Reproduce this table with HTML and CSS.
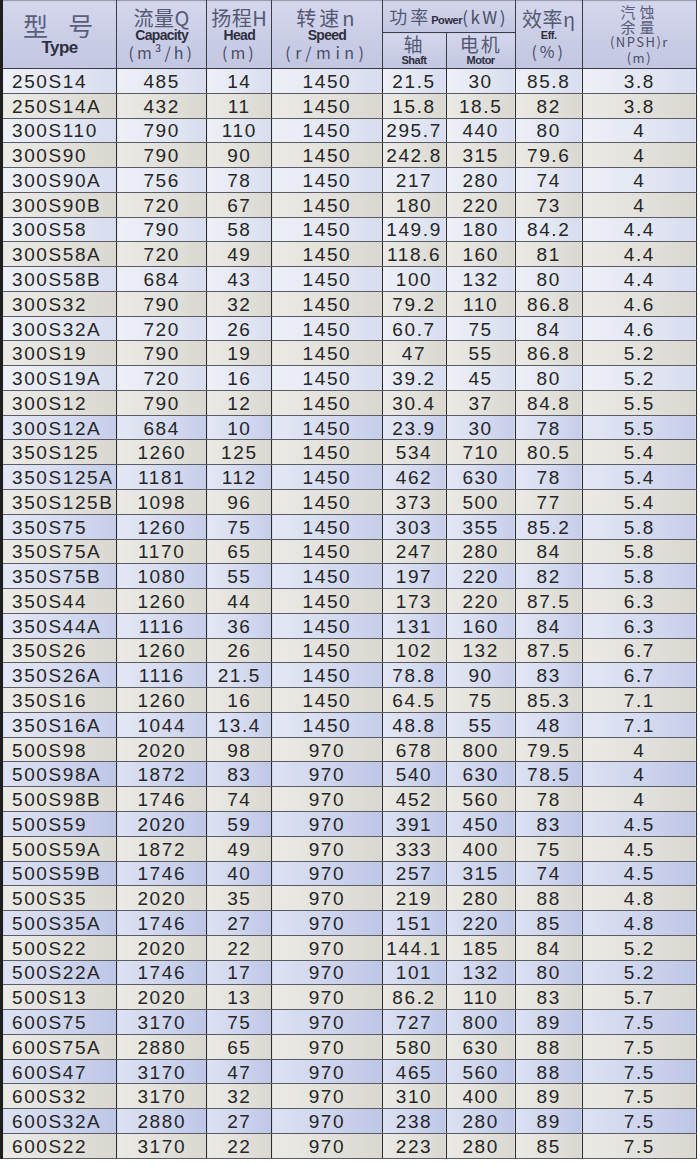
FILE: index.html
```html
<!DOCTYPE html>
<html lang="zh">
<head>
<meta charset="utf-8">
<title>S型双吸泵性能参数表</title>
<link rel="stylesheet" href="styles.css">
</head>
<body>
<table class="spec">
  <colgroup>
    <col class="c-type"><col class="c-cap"><col class="c-head"><col class="c-speed">
    <col class="c-shaft"><col class="c-motor"><col class="c-eff"><col class="c-npsh">
  </colgroup>
  <thead>
    <tr class="h1">
      <th rowspan="2" class="th-type"><span class="cn-big">型&nbsp;&nbsp;号</span><span class="en-big">Type</span></th>
      <th rowspan="2"><span class="cn">流量Q</span><span class="en">Capacity</span><span class="unit">(m³/h)</span></th>
      <th rowspan="2"><span class="cn">扬程H</span><span class="en">Head</span><span class="unit">(m)</span></th>
      <th rowspan="2" class="th-speed"><span class="cn">转速n</span><span class="en">Speed</span><span class="unit">(r/min)</span></th>
      <th colspan="2" class="th-power"><span class="cn">功率</span><span class="en-s">Power</span><span class="unit">(kW)</span></th>
      <th rowspan="2"><span class="cn">效率η</span><span class="en-s">Eff.</span><span class="unit">(%)</span></th>
      <th rowspan="2" class="th-npsh"><span class="cn-s">汽蚀</span><span class="cn-s">余量</span><span class="unit-s">(NPSH)r</span><span class="unit-s">(m)</span></th>
    </tr>
    <tr class="h2">
      <th><span class="cn-m">轴</span><span class="en-s">Shaft</span></th>
      <th><span class="cn-m">电机</span><span class="en-s">Motor</span></th>
    </tr>
  </thead>
  <tbody>
    <tr><td>250S14</td><td>485</td><td>14</td><td>1450</td><td>21.5</td><td>30</td><td>85.8</td><td>3.8</td></tr>
    <tr><td>250S14A</td><td>432</td><td>11</td><td>1450</td><td>15.8</td><td>18.5</td><td>82</td><td>3.8</td></tr>
    <tr><td>300S110</td><td>790</td><td>110</td><td>1450</td><td>295.7</td><td>440</td><td>80</td><td>4</td></tr>
    <tr><td>300S90</td><td>790</td><td>90</td><td>1450</td><td>242.8</td><td>315</td><td>79.6</td><td>4</td></tr>
    <tr><td>300S90A</td><td>756</td><td>78</td><td>1450</td><td>217</td><td>280</td><td>74</td><td>4</td></tr>
    <tr><td>300S90B</td><td>720</td><td>67</td><td>1450</td><td>180</td><td>220</td><td>73</td><td>4</td></tr>
    <tr><td>300S58</td><td>790</td><td>58</td><td>1450</td><td>149.9</td><td>180</td><td>84.2</td><td>4.4</td></tr>
    <tr><td>300S58A</td><td>720</td><td>49</td><td>1450</td><td>118.6</td><td>160</td><td>81</td><td>4.4</td></tr>
    <tr><td>300S58B</td><td>684</td><td>43</td><td>1450</td><td>100</td><td>132</td><td>80</td><td>4.4</td></tr>
    <tr><td>300S32</td><td>790</td><td>32</td><td>1450</td><td>79.2</td><td>110</td><td>86.8</td><td>4.6</td></tr>
    <tr><td>300S32A</td><td>720</td><td>26</td><td>1450</td><td>60.7</td><td>75</td><td>84</td><td>4.6</td></tr>
    <tr><td>300S19</td><td>790</td><td>19</td><td>1450</td><td>47</td><td>55</td><td>86.8</td><td>5.2</td></tr>
    <tr><td>300S19A</td><td>720</td><td>16</td><td>1450</td><td>39.2</td><td>45</td><td>80</td><td>5.2</td></tr>
    <tr><td>300S12</td><td>790</td><td>12</td><td>1450</td><td>30.4</td><td>37</td><td>84.8</td><td>5.5</td></tr>
    <tr><td>300S12A</td><td>684</td><td>10</td><td>1450</td><td>23.9</td><td>30</td><td>78</td><td>5.5</td></tr>
    <tr><td>350S125</td><td>1260</td><td>125</td><td>1450</td><td>534</td><td>710</td><td>80.5</td><td>5.4</td></tr>
    <tr><td>350S125A</td><td>1181</td><td>112</td><td>1450</td><td>462</td><td>630</td><td>78</td><td>5.4</td></tr>
    <tr><td>350S125B</td><td>1098</td><td>96</td><td>1450</td><td>373</td><td>500</td><td>77</td><td>5.4</td></tr>
    <tr><td>350S75</td><td>1260</td><td>75</td><td>1450</td><td>303</td><td>355</td><td>85.2</td><td>5.8</td></tr>
    <tr><td>350S75A</td><td>1170</td><td>65</td><td>1450</td><td>247</td><td>280</td><td>84</td><td>5.8</td></tr>
    <tr><td>350S75B</td><td>1080</td><td>55</td><td>1450</td><td>197</td><td>220</td><td>82</td><td>5.8</td></tr>
    <tr><td>350S44</td><td>1260</td><td>44</td><td>1450</td><td>173</td><td>220</td><td>87.5</td><td>6.3</td></tr>
    <tr><td>350S44A</td><td>1116</td><td>36</td><td>1450</td><td>131</td><td>160</td><td>84</td><td>6.3</td></tr>
    <tr><td>350S26</td><td>1260</td><td>26</td><td>1450</td><td>102</td><td>132</td><td>87.5</td><td>6.7</td></tr>
    <tr><td>350S26A</td><td>1116</td><td>21.5</td><td>1450</td><td>78.8</td><td>90</td><td>83</td><td>6.7</td></tr>
    <tr><td>350S16</td><td>1260</td><td>16</td><td>1450</td><td>64.5</td><td>75</td><td>85.3</td><td>7.1</td></tr>
    <tr><td>350S16A</td><td>1044</td><td>13.4</td><td>1450</td><td>48.8</td><td>55</td><td>48</td><td>7.1</td></tr>
    <tr><td>500S98</td><td>2020</td><td>98</td><td>970</td><td>678</td><td>800</td><td>79.5</td><td>4</td></tr>
    <tr><td>500S98A</td><td>1872</td><td>83</td><td>970</td><td>540</td><td>630</td><td>78.5</td><td>4</td></tr>
    <tr><td>500S98B</td><td>1746</td><td>74</td><td>970</td><td>452</td><td>560</td><td>78</td><td>4</td></tr>
    <tr><td>500S59</td><td>2020</td><td>59</td><td>970</td><td>391</td><td>450</td><td>83</td><td>4.5</td></tr>
    <tr><td>500S59A</td><td>1872</td><td>49</td><td>970</td><td>333</td><td>400</td><td>75</td><td>4.5</td></tr>
    <tr><td>500S59B</td><td>1746</td><td>40</td><td>970</td><td>257</td><td>315</td><td>74</td><td>4.5</td></tr>
    <tr><td>500S35</td><td>2020</td><td>35</td><td>970</td><td>219</td><td>280</td><td>88</td><td>4.8</td></tr>
    <tr><td>500S35A</td><td>1746</td><td>27</td><td>970</td><td>151</td><td>220</td><td>85</td><td>4.8</td></tr>
    <tr><td>500S22</td><td>2020</td><td>22</td><td>970</td><td>144.1</td><td>185</td><td>84</td><td>5.2</td></tr>
    <tr><td>500S22A</td><td>1746</td><td>17</td><td>970</td><td>101</td><td>132</td><td>80</td><td>5.2</td></tr>
    <tr><td>500S13</td><td>2020</td><td>13</td><td>970</td><td>86.2</td><td>110</td><td>83</td><td>5.7</td></tr>
    <tr><td>600S75</td><td>3170</td><td>75</td><td>970</td><td>727</td><td>800</td><td>89</td><td>7.5</td></tr>
    <tr><td>600S75A</td><td>2880</td><td>65</td><td>970</td><td>580</td><td>630</td><td>88</td><td>7.5</td></tr>
    <tr><td>600S47</td><td>3170</td><td>47</td><td>970</td><td>465</td><td>560</td><td>88</td><td>7.5</td></tr>
    <tr><td>600S32</td><td>3170</td><td>32</td><td>970</td><td>310</td><td>400</td><td>89</td><td>7.5</td></tr>
    <tr><td>600S32A</td><td>2880</td><td>27</td><td>970</td><td>238</td><td>280</td><td>89</td><td>7.5</td></tr>
    <tr><td>600S22</td><td>3170</td><td>22</td><td>970</td><td>223</td><td>280</td><td>85</td><td>7.5</td></tr>
  </tbody>
</table>
</body>
</html>
```
FILE: styles.css
```css
html, body {
  margin: 0;
  padding: 0;
  background: #ffffff;
}

.spec {
  border-collapse: collapse;
  table-layout: fixed;
  width: 697px;
  font-family: "Liberation Sans", "Noto Sans CJK SC", sans-serif;
  color: #262626;
  border-left: 3px solid #1e1e1e;
  border-right: 1px solid #3a3a3a;
  border-bottom: 1px solid #555;
}

.c-type { width: 115px; }
.c-cap { width: 90px; }
.c-head { width: 65px; }
.c-speed { width: 110px; }
.c-shaft { width: 64px; }
.c-motor { width: 69px; }
.c-eff { width: 67px; }
.c-npsh { width: 114px; }

/* ---------- header ---------- */
.spec thead th {
  background: linear-gradient(to bottom, #d4d7ec 0%, #c9cce5 60%, #c2c6e0 100%);
  border: 1px solid #3c3c48;
  border-top: 1px solid #9a9cb0;
  padding: 0;
  font-weight: normal;
  vertical-align: middle;
  text-align: center;
  line-height: 1;
  color: #4a4e66;
}
.spec thead th span { display: block; }

.h1 { height: 32px; }
.h2 { height: 36px; }

.cn-big {
  font-family: "Noto Sans CJK SC", sans-serif;
  font-size: 25px;
  color: #5a5f7e;
  line-height: 28px;
  letter-spacing: 3px;
  margin-top: -2px;
}
.en-big {
  font-family: "Liberation Sans", sans-serif;
  font-weight: bold;
  font-size: 17px;
  letter-spacing: -0.6px;
  color: #2e3040;
  line-height: 18px;
}
.cn {
  font-family: "Noto Sans CJK SC", sans-serif;
  font-size: 20px;
  line-height: 21px;
  letter-spacing: 0.5px;
  color: #555a74;
}
.th-speed .cn { letter-spacing: 3px; }
.en {
  font-family: "Liberation Sans", sans-serif;
  font-weight: bold;
  font-size: 14px;
  letter-spacing: -0.7px;
  line-height: 15px;
  color: #2e3040;
}
.unit {
  font-family: "Noto Sans CJK SC", sans-serif;
  font-size: 16px;
  letter-spacing: 3px;
  line-height: 19px;
  color: #4a4e66;
}
.th-speed .unit { letter-spacing: 4.5px; }
.spec thead .th-power span { display: inline; }
.spec thead .th-power { white-space: nowrap; }
.th-power .cn { font-size: 18px; letter-spacing: 3px; }
.th-power .en-s { font-size: 11px; letter-spacing: -0.4px; }
.th-power .unit { font-size: 17px; letter-spacing: 2.5px; }

.cn-m {
  font-family: "Noto Sans CJK SC", sans-serif;
  font-size: 19px;
  line-height: 20px;
  color: #555a74;
  letter-spacing: 2px;
}
.en-s {
  font-family: "Liberation Sans", sans-serif;
  font-weight: bold;
  font-size: 11px;
  letter-spacing: -0.5px;
  line-height: 13px;
  color: #2e3040;
}
.th-npsh .cn-s {
  font-family: "Noto Sans CJK SC", sans-serif;
  font-size: 15px;
  line-height: 15px;
  letter-spacing: 4px;
  color: #5a5f7e;
}
.unit-s {
  font-family: "Noto Sans CJK SC", sans-serif;
  font-size: 13px;
  line-height: 16px;
  letter-spacing: 1.5px;
  color: #4a4e66;
}

/* ---------- body ---------- */
.spec tbody tr { height: 24.78px; }
.spec tbody td {
  padding: 2px 0 0 0;
  border-left: 1px solid #2c2c2c;
  border-right: 1px solid #2c2c2c;
  border-top: 1px solid #5c5c64;
  border-bottom: 1px solid #5c5c64;
  text-align: center;
  font-size: 19px;
  letter-spacing: 1.6px;
  line-height: 20px;
  white-space: nowrap;
  overflow: hidden;
}
.spec tbody td:first-child {
  text-align: left;
  padding-left: 9px;
}

.spec tbody tr:nth-child(odd) td {
  background: linear-gradient(to right, #eef0f7 0%, #e2e6f3 60%, #d7dcef 100%);
}
.spec tbody tr:nth-child(even) td {
  background: linear-gradient(to right, #ebeae6 0%, #e1dfd9 60%, #d9d7d0 100%);
}
.spec tbody tr:nth-child(odd):nth-child(n+15) td {
  background: linear-gradient(to right, #e4e8f5 0%, #d3d9ef 60%, #c6cde9 100%);
}
.spec tbody tr:nth-child(odd):nth-child(n+29) td {
  background: linear-gradient(to right, #dde2f3 0%, #cbd2ec 60%, #bdc6e6 100%);
}
```
